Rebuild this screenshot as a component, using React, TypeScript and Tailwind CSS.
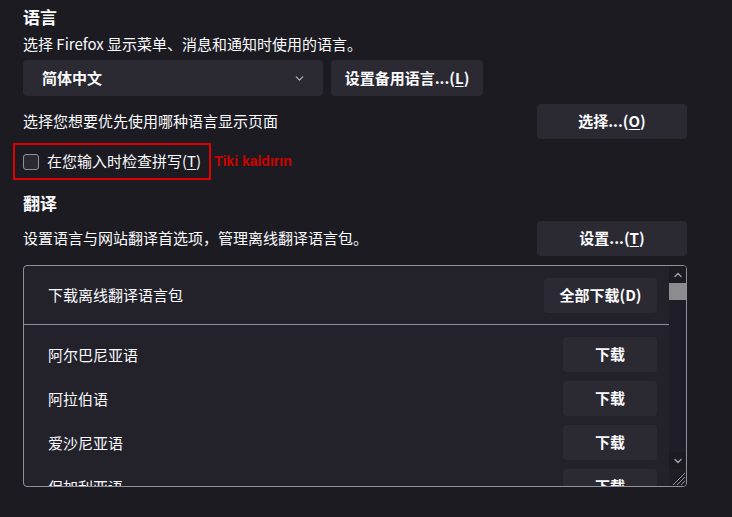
import { ChevronDown, ChevronUp } from 'lucide-react';

const font = { fontFamily: '"Noto Sans CJK SC", "Noto Sans", sans-serif' };

const langs = ['阿尔巴尼亚语', '阿拉伯语', '爱沙尼亚语', '保加利亚语'];

function Btn({ children, className = '' }: { children: React.ReactNode; className?: string }) {
  return (
    <button
      className={`h-[35px] rounded-[4px] bg-[#2b2a33] text-[15px] font-bold text-[#fbfbfe] flex items-center justify-center ${className}`}
    >
      {children}
    </button>
  );
}

export default function App() {
  return (
    <div className="w-[732px] h-[517px] bg-[#1c1b22] text-[#fbfbfe] overflow-hidden" style={font}>
      <div className="ml-[23px] w-[664px] flex flex-col">
        <h1 className="mt-[7px] h-[20px] leading-[20px] text-[17px] font-bold">语言</h1>
        <p className="mt-[6px] h-[22px] leading-[22px] text-[15px]">选择 Firefox 显示菜单、消息和通知时使用的语言。</p>

        <div className="mt-[5px] flex gap-[8px]">
          <div className="w-[300px] h-[36px] rounded-[4px] bg-[#2b2a33] flex items-center justify-between pl-[19px] pr-[17px]">
            <span className="text-[15px] font-bold">简体中文</span>
            <ChevronDown size={13} strokeWidth={2} className="text-[#b8b8c0]" />
          </div>
          <Btn className="w-[152px] h-[36px]">
            设置备用语言...(<span className="underline underline-offset-2">L</span>)
          </Btn>
        </div>

        <div className="mt-[8px] h-[35px] flex items-center justify-between">
          <span className="text-[15px]">选择您想要优先使用哪种语言显示页面</span>
          <Btn className="w-[150px]">
            选择...(<span className="underline underline-offset-2">O</span>)
          </Btn>
        </div>

        <div className="relative mt-[4px] h-[37px] flex items-center">
          <div className="absolute left-[-10px] top-0 w-[198px] h-[37px] border-2 border-[#e00000] pointer-events-none" />
          <span className="w-[16px] h-[16px] rounded-[3px] border border-[#8f8f9d] bg-[#2b2a33]" />
          <span className="ml-[8px] text-[15px]">
            在您输入时检查拼写(<span className="underline underline-offset-2">T</span>)
          </span>
          <span
            className="ml-[13px] text-[14px] font-bold text-[#d00000]"
            style={{ fontFamily: '"Liberation Sans", Arial, sans-serif' }}
          >
            Tiki kaldırın
          </span>
        </div>

        <h2 className="mt-[13px] h-[20px] leading-[20px] text-[17px] font-bold">翻译</h2>

        <div className="mt-[8px] h-[35px] flex items-center justify-between">
          <span className="text-[15px]">设置语言与网站翻译首选项，管理离线翻译语言包。</span>
          <Btn className="w-[150px]">
            设置...(<span className="underline underline-offset-2">T</span>)
          </Btn>
        </div>

        <div className="mt-[9px] h-[222px] rounded-[4px] border border-[#8f8f9d] bg-[#23222b] flex overflow-hidden">
          <div className="flex-1 overflow-hidden">
            <div className="h-[59px] pl-[24px] pr-[12px] flex items-center justify-between border-b border-[#8f8f9d]">
              <span className="text-[15px]">下载离线翻译语言包</span>
              <Btn className="w-[113px]">全部下载(D)</Btn>
            </div>
            <div className="pt-[12px] flex flex-col gap-[9px]">
              {langs.map((l) => (
                <div key={l} className="h-[35px] pl-[24px] pr-[12px] flex items-center justify-between shrink-0">
                  <span className="text-[15px] pt-[2px]">{l}</span>
                  <Btn className="w-[94px]">下载</Btn>
                </div>
              ))}
            </div>
          </div>
          <div className="w-[17px] bg-[#1f1e26] flex flex-col">
            <div className="h-[17px] bg-[#1c1b22] flex items-center justify-center">
              <ChevronUp size={12} strokeWidth={3} className="text-[#9d9da6]" />
            </div>
            <div className="h-[17px] bg-[#8b8b90]" />
            <div className="flex-1" />
            <div className="h-[17px] bg-[#1c1b22] flex items-center justify-center">
              <ChevronDown size={12} strokeWidth={3} className="text-[#9d9da6]" />
            </div>
            <div className="h-[17px] flex items-end justify-end">
              <svg width="15" height="15" viewBox="0 0 15 15">
                <g stroke="#8f8f9d" strokeWidth="1">
                  <line x1="14" y1="2" x2="2" y2="14" />
                  <line x1="14" y1="6" x2="6" y2="14" />
                  <line x1="14" y1="10" x2="10" y2="14" />
                </g>
              </svg>
            </div>
          </div>
        </div>
      </div>
    </div>
  );
}
